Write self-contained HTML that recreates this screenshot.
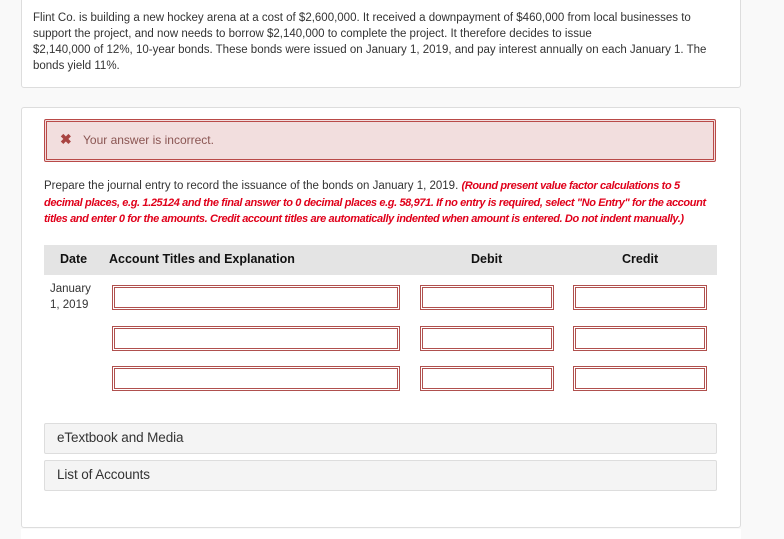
<!DOCTYPE html>
<html><head><style>
*{box-sizing:border-box;margin:0;padding:0}
body{width:784px;height:539px;background:#f9f9f9;font-family:"Liberation Sans",sans-serif;color:#333;position:relative;overflow:hidden}
.card{position:absolute;left:21px;width:720px;background:#fff;border:1px solid #ddd;border-radius:3px}
.t{font-size:11.5px;white-space:nowrap}
.err{position:absolute;left:44px;top:119px;width:672px;height:43px;background:#f2dede;border:3px double #b94a48;border-radius:2px}
.inp{position:absolute;height:25px;border:3px double #b0504e;background:#fff}
.acc{position:absolute;left:44px;width:673px;height:31px;background:#f4f4f4;border:1px solid #ddd;border-radius:2px;font-size:13.5px;padding:6px 12px;letter-spacing:-0.1px}
.r{color:#e0001a;font-style:italic;font-weight:bold;font-size:11px;letter-spacing:-0.38px}
</style></head><body>
<div class="card" style="top:-5px;height:93px"></div>
<div class="t" style="position:absolute;left:33px;top:10px;line-height:16px">Flint Co. is building a new hockey arena at a cost of $2,600,000. It received a downpayment of $460,000 from local businesses to<br>support the project, and now needs to borrow $2,140,000 to complete the project. It therefore decides to issue<br>$2,140,000 of 12%, 10-year bonds. These bonds were issued on January 1, 2019, and pay interest annually on each January 1. The<br>bonds yield 11%.</div>
<div class="card" style="top:107px;height:421px"></div>
<div class="err"><span style="position:absolute;left:13px;top:9px;color:#a94442;font-size:14px;font-weight:bold">✖</span><span style="position:absolute;left:36px;top:11px;color:#8a5552;font-size:12px">Your answer is incorrect.</span></div>
<div class="t" style="position:absolute;left:44px;top:178px;line-height:16.5px">Prepare the journal entry to record the issuance of the bonds on January 1, 2019. <span class="r">(Round present value factor calculations to 5</span><br><span class="r">decimal places, e.g. 1.25124 and the final answer to 0 decimal places e.g. 58,971. If no entry is required, select "No Entry" for the account</span><br><span class="r">titles and enter 0 for the amounts. Credit account titles are automatically indented when amount is entered. Do not indent manually.)</span></div>
<div style="position:absolute;left:44px;top:245px;width:673px;height:30px;background:#e4e4e4;font-size:12.5px;font-weight:bold;color:#111">
<span style="position:absolute;left:16px;top:7px">Date</span>
<span style="position:absolute;left:65px;top:7px">Account Titles and Explanation</span>
<span style="position:absolute;left:427px;top:7px">Debit</span>
<span style="position:absolute;left:578px;top:7px">Credit</span>
</div>
<div class="t" style="position:absolute;left:50px;top:281px;line-height:16px">January<br>1, 2019</div>
<div class="inp" style="left:112px;top:285px;width:288px"></div>
<div class="inp" style="left:420px;top:285px;width:134px"></div>
<div class="inp" style="left:573px;top:285px;width:134px"></div>
<div class="inp" style="left:112px;top:326px;width:288px"></div>
<div class="inp" style="left:420px;top:326px;width:134px"></div>
<div class="inp" style="left:573px;top:326px;width:134px"></div>
<div class="inp" style="left:112px;top:366px;width:288px"></div>
<div class="inp" style="left:420px;top:366px;width:134px"></div>
<div class="inp" style="left:573px;top:366px;width:134px"></div>
<div class="acc" style="top:423px">eTextbook and Media</div>
<div class="acc" style="top:460px">List of Accounts</div>
<div style="position:absolute;left:21px;top:529px;width:720px;height:10px;background:#fff"></div>
</body></html>
